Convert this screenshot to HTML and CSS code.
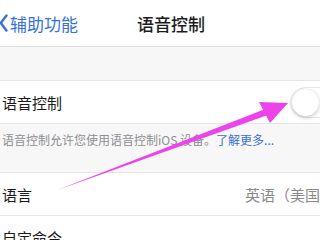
FILE: index.html
```html
<!DOCTYPE html>
<html lang="zh-CN">
<head>
  <meta charset="UTF-8">
  <meta name="viewport" content="width=device-width, initial-scale=1.0">
  <title>语音控制</title>
  <link rel="stylesheet" href="styles.css">
</head>
<body>
<div class="page">
  <div class="nav">
    <div class="back">
      <svg class="chevron" width="8" height="18" viewBox="0 0 8 18">
        <polyline points="6.5,1.5 0.8,9 6.5,16.5" fill="none" stroke="#3771d9" stroke-width="2.4" stroke-linecap="round" stroke-linejoin="round"/>
      </svg>
      <span>辅助功能</span>
    </div>
    <div class="title">语音控制</div>
  </div>

  <div class="group first">
    <div class="row">
      <span class="label">语音控制</span>
      <div class="toggle"><div class="knob"></div></div>
    </div>
  </div>
  <div class="footer">语音控制允许您使用语音控制iOS 设备。<span class="link">了解更多...</span></div>

  <div class="group">
    <div class="row">
      <span class="label">语言</span>
      <span class="value">英语（美国）</span>
    </div>
    <div class="row">
      <span class="label">自定命令</span>
    </div>
  </div>
</div>

<svg class="arrow" width="320" height="240" viewBox="0 0 320 240">
  <polygon points="56,190.5 264,109.5 266.5,115.5" fill="#ec44ea"/>
  <polygon points="259,102 288,103 270,123" fill="#ec44ea"/>
</svg>
</body>
</html>
```

FILE: styles.css
```css
body {
  margin: 0;
  width: 320px;
  height: 240px;
  overflow: hidden;
  background: #f7f7f7;
  font-family: "Noto Sans CJK SC", "Noto Sans", sans-serif;
}
.page {
  width: 344px;
}
.nav {
  height: 46px;
  background: #fff;
  border-bottom: 1px solid #dedede;
  display: flex;
  align-items: center;
}
.back {
  display: flex;
  align-items: center;
  color: #3771d9;
  font-size: 17px;
}
.chevron {
  margin-right: 2px;
}
.title {
  margin-left: 59px;
  font-size: 17px;
  font-weight: 500;
  color: #1c1c1c;
}
.group {
  background: #fff;
  border-top: 1px solid #e6e6e6;
  border-bottom: 1px solid #e6e6e6;
}
.group.first {
  margin-top: 33px;
}
.row {
  height: 42px;
  display: flex;
  align-items: center;
  justify-content: space-between;
  padding: 0 3px 0 2px;
  font-size: 15px;
  color: #1a1a1a;
}
.row + .row {
  border-top: 1px solid #e6e6e6;
}
.value {
  color: #8a8a8a;
  padding-right: 6px;
}
.toggle {
  width: 51px;
  height: 31px;
  box-sizing: border-box;
  border: 1.5px solid #e6e6ea;
  border-radius: 16px;
  background: #fff;
  display: flex;
  align-items: center;
  padding-left: 1px;
}
.knob {
  width: 27px;
  height: 27px;
  border-radius: 50%;
  background: #fff;
  box-shadow: 0 2px 4px rgba(0,0,0,0.18), 0 0 1px rgba(0,0,0,0.2);
}
.footer {
  height: 48px;
  box-sizing: border-box;
  padding: 9px 0 0 2px;
  font-size: 12px;
  line-height: 14px;
  color: #8e8e93;
  margin-bottom: 0;
}
.link {
  color: #3771d9;
}
.arrow {
  position: absolute;
  left: 0;
  top: 0;
}
```
